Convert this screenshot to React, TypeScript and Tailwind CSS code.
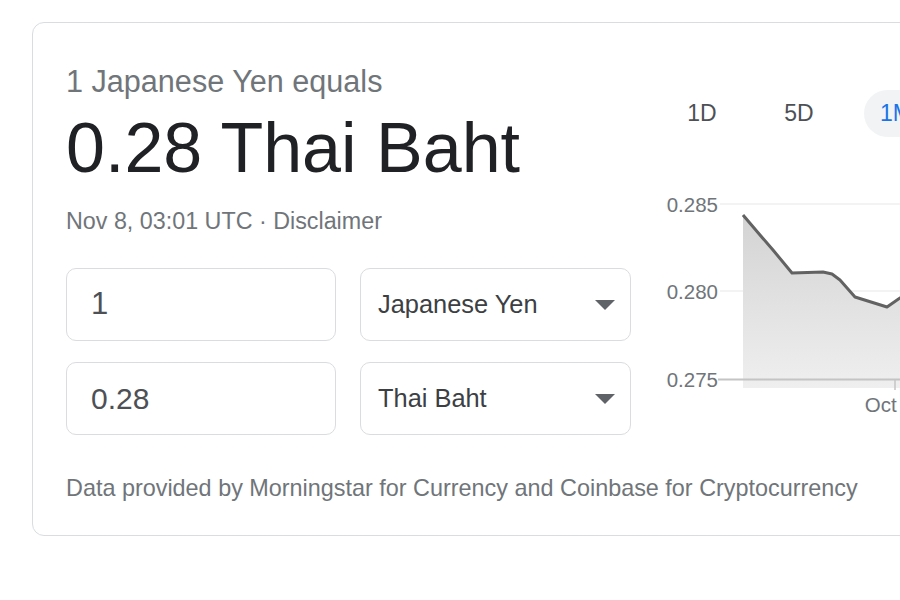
import React from 'react';

const font = { fontFamily: '"Liberation Sans", Arial, Helvetica, sans-serif' };

const tabs = ['1D', '5D', '1M', '1Y', '5Y', 'Max'];

const linePoints = '83,35 100,55 113,70 132,93 163,92 172,94 180,100 195,117 227,127 240,118 258,108 280,112 300,100';

const Caret = () => (
  <svg width="20" height="10" viewBox="0 0 20 10" className="shrink-0">
    <path d="M0 0 L20 0 L10 10 Z" fill="#5f6368" />
  </svg>
);

const Chart = () => (
  <svg width="340" height="240" viewBox="0 0 340 240" className="block">
    <defs>
      <linearGradient id="area" x1="0" y1="0" x2="0" y2="1">
        <stop offset="0%" stopColor="#d3d3d3" />
        <stop offset="100%" stopColor="#efefef" />
      </linearGradient>
    </defs>
    <line x1="60" y1="24" x2="340" y2="24" stroke="#f3f3f3" strokeWidth="2" />
    <line x1="60" y1="111" x2="340" y2="111" stroke="#f3f3f3" strokeWidth="2" />
    <polygon points={`83,208 ${linePoints} 300,208`} fill="url(#area)" />
    <polyline points={linePoints} fill="none" stroke="#626262" strokeWidth="3" strokeLinejoin="round" />
    <line x1="58" y1="199.5" x2="340" y2="199.5" stroke="#c4c4c4" strokeWidth="2" />
    <line x1="235" y1="199" x2="235" y2="210" stroke="#c4c4c4" strokeWidth="1.5" />
    <g fill="#70757a" fontSize="20.5" style={font}>
      <text x="58" y="31.5" textAnchor="end">0.285</text>
      <text x="58" y="119" textAnchor="end">0.280</text>
      <text x="58" y="206.5" textAnchor="end">0.275</text>
      <text x="235" y="231.5" textAnchor="middle">Oct 15</text>
    </g>
  </svg>
);

const App = () => {
  return (
    <div className="w-[900px] h-[600px] overflow-hidden bg-white" style={font}>
      <div className="pt-[22px] pl-[32px]">
        <div className="w-[1000px] border border-[#dadce0] rounded-[12px]">
          <div className="flex">
            {/* Left: result + converter */}
            <div className="w-[598px] pl-[33px] pt-[40px]">
              <div className="text-[30.6px] leading-[36px] text-[#70757a]">1 Japanese Yen equals</div>
              <div className="mt-[9px] text-[70px] leading-[80px] text-[#202124]">0.28 Thai Baht</div>
              <div className="mt-[19px] text-[23.3px] leading-[28px] text-[#70757a]">
                Nov 8, 03:01 UTC · Disclaimer
              </div>

              <div className="mt-[33px] grid grid-cols-[270px_271px] gap-x-[24px] gap-y-[21px]">
                <div className="h-[73px] border border-[#dadce0] rounded-[10px] flex items-center pl-[24px] text-[31px] text-[#4d5156]">
                  1
                </div>
                <div className="h-[73px] border border-[#dadce0] rounded-[10px] flex items-center justify-between pl-[17px] pr-[15px] text-[25.4px] text-[#3c4043]">
                  <span>Japanese Yen</span>
                  <Caret />
                </div>
                <div className="h-[73px] border border-[#dadce0] rounded-[10px] flex items-center pl-[24px] text-[30px] text-[#4d5156]">
                  0.28
                </div>
                <div className="h-[73px] border border-[#dadce0] rounded-[10px] flex items-center justify-between pl-[17px] pr-[15px] text-[25.4px] text-[#3c4043]">
                  <span>Thai Baht</span>
                  <Caret />
                </div>
              </div>
            </div>

            {/* Right: chart */}
            <div className="ml-[29px] pt-[67px]">
              <div className="ml-[10px] flex gap-[33px]">
                {tabs.map((t) => (
                  <div
                    key={t}
                    className={
                      t === '1M'
                        ? 'w-[64px] h-[47px] rounded-full bg-[#f1f3f4] flex items-center justify-center text-[23px] text-[#1a73e8]'
                        : 'w-[64px] h-[47px] rounded-full flex items-center justify-center text-[23px] text-[#4d5156]'
                    }
                  >
                    {t}
                  </div>
                ))}
              </div>
              <div className="mt-[43px]">
                <Chart />
              </div>
            </div>
          </div>

          <div className="pl-[33px] mt-[39px] pb-[33px] text-[23.4px] leading-[28px] text-[#70757a]">
            Data provided by Morningstar for Currency and Coinbase for Cryptocurrency
          </div>
        </div>
      </div>
    </div>
  );
};

export default App;
